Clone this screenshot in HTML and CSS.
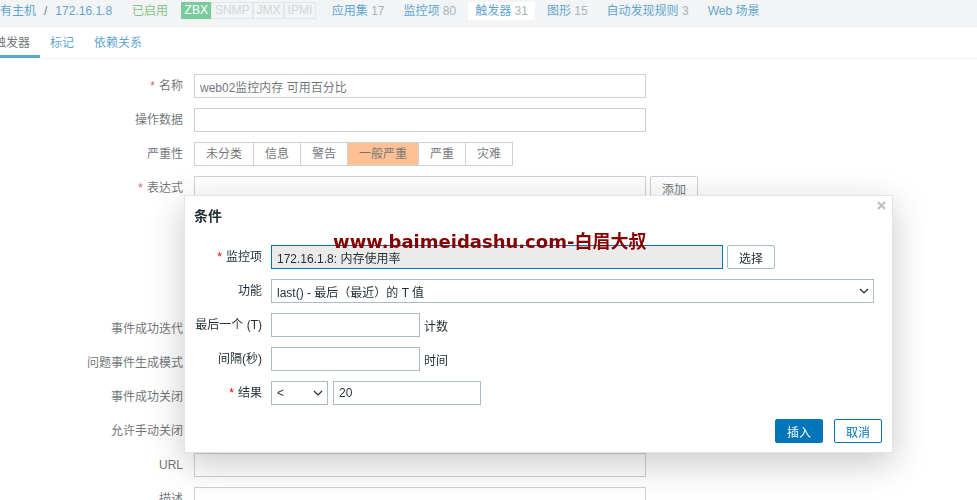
FILE: index.html
```html
<!DOCTYPE html>
<html>
<head>
    <meta charset="utf-8">
    <meta name="viewport" content="width=device-width, initial-scale=1.0">
    <title>触发器</title>
    <link rel="stylesheet" href="styles.css">
</head>
<body>
    <header class="host-nav">
        <div class="breadcrumbs">
            <a href="#">所有主机</a><span class="sep">/</span><a href="#">172.16.1.8</a>
        </div>
        <span class="status-on">已启用</span>
        <div class="avail">
            <span class="badge on">ZBX</span><span class="badge">SNMP</span><span class="badge">JMX</span><span class="badge">IPMI</span>
        </div>
        <nav class="host-links">
            <a href="#">应用集 <span class="count">17</span></a>
            <a href="#">监控项 <span class="count">80</span></a>
            <a href="#" class="selected">触发器 <span class="count">31</span></a>
            <a href="#">图形 <span class="count">15</span></a>
            <a href="#">自动发现规则 <span class="count">3</span></a>
            <a href="#">Web 场景</a>
        </nav>
    </header>

    <nav class="tabs">
        <a href="#" class="active">触发器</a>
        <a href="#">标记</a>
        <a href="#">依赖关系</a>
    </nav>

    <form class="trigger-form">
        <label class="required">名称</label>
        <div class="field"><input type="text" class="text wide" value="web02监控内存 可用百分比"></div>

        <label>操作数据</label>
        <div class="field"><input type="text" class="text wide"></div>

        <label>严重性</label>
        <div class="field">
            <div class="radio-group">
                <span>未分类</span><span>信息</span><span>警告</span><span class="checked">一般严重</span><span>严重</span><span>灾难</span>
            </div>
        </div>

        <label class="required">表达式</label>
        <div class="field top">
            <textarea class="text wide expr"></textarea>
            <button type="button" class="btn-grey">添加</button>
        </div>

        <label></label>
        <div class="field"><a href="#">表达式构造器</a></div>

        <label>事件成功迭代</label>
        <div class="field">
            <div class="radio-group">
                <span class="checked-blue">表达式</span><span>恢复表达式</span><span>无</span>
            </div>
        </div>

        <label>问题事件生成模式</label>
        <div class="field">
            <div class="radio-group">
                <span class="checked-blue">单个</span><span>多重</span>
            </div>
        </div>

        <label>事件成功关闭</label>
        <div class="field">
            <div class="radio-group">
                <span class="checked-blue">所有问题</span><span>所有问题如果标签值匹配</span>
            </div>
        </div>

        <label>允许手动关闭</label>
        <div class="field"><span class="checkbox"></span></div>

        <label>URL</label>
        <div class="field"><input type="text" class="text wide"></div>

        <label>描述</label>
        <div class="field top"><textarea class="text wide desc"></textarea></div>
    </form>

    <div class="overlay-bg"></div>

    <div class="dialogue">
        <div class="dialogue-head">
            <h4>条件</h4>
            <button type="button" class="close" title="关闭">
                <svg width="9" height="9" viewBox="0 0 9 9"><path d="M1 1 L8 8 M8 1 L1 8" stroke="#b7bec2" stroke-width="2" fill="none"/></svg>
            </button>
        </div>
        <div class="dialogue-body">
            <label class="required">监控项</label>
            <div class="field">
                <input type="text" class="text item" value="172.16.1.8: 内存使用率" readonly>
                <button type="button" class="btn-grey">选择</button>
            </div>

            <label>功能</label>
            <div class="field">
                <div class="select func">
                    <span>last() - 最后（最近）的 T 值</span>
                    <svg width="10" height="6" viewBox="0 0 10 6"><polyline points="1,1 5,5 9,1" stroke="#1f2c33" stroke-width="1.2" fill="none"/></svg>
                </div>
            </div>

            <label>最后一个 (T)</label>
            <div class="field"><input type="text" class="text short"><span>计数</span></div>

            <label>间隔(秒)</label>
            <div class="field"><input type="text" class="text short"><span>时间</span></div>

            <label class="required">结果</label>
            <div class="field gap5">
                <div class="select op">
                    <span>&lt;</span>
                    <svg width="10" height="6" viewBox="0 0 10 6"><polyline points="1,1 5,5 9,1" stroke="#1f2c33" stroke-width="1.2" fill="none"/></svg>
                </div>
                <input type="text" class="text short value" value="20">
            </div>
        </div>
        <div class="dialogue-foot">
            <button type="button" class="btn-main">插入</button>
            <button type="button" class="btn-alt">取消</button>
        </div>
    </div>

    <div class="watermark">www.baimeidashu.com-白眉大叔</div>
</body>
</html>
```

FILE: styles.css
```css
html, body {
    overflow: hidden;
}
body {
    margin: 0;
    font-family: "Liberation Sans", Arial, "Noto Sans CJK SC", sans-serif;
    font-size: 12px;
    color: #1f2c33;
    background: #fff;
    height: 500px;
    position: relative;
}
a {
    color: #0275b8;
    text-decoration: none;
}

/* host navigation bar */
.host-nav {
    display: flex;
    align-items: flex-start;
    height: 26px;
    margin-left: -19px;
    background: #ebeef0;
    border-bottom: 1px solid #dfe4e7;
}
.host-nav > * {
    margin-top: 2px;
}
.breadcrumbs {
    padding: 0 7px;
    line-height: 18px;
}
.breadcrumbs .sep {
    margin: 0 8px;
    color: #1f2c33;
}
.status-on {
    padding: 0 7px;
    margin-left: 6px;
    line-height: 18px;
    color: #429e47;
}
.avail {
    display: flex;
    margin-left: 6px;
}
.badge {
    padding: 0 2.5px;
    line-height: 15px;
    border: 1px solid #d5dadd;
    color: #b7c1c6;
}
.badge.on {
    background: #34af67;
    border-color: #34af67;
    color: #fff;
}
.host-links {
    display: flex;
    gap: 5px;
    margin-left: 9px;
}
.host-links a {
    padding: 0 7px;
    height: 18px;
    line-height: 18px;
}
.host-links a.selected {
    background: #fff;
}
.count {
    color: #768d99;
}

/* tabs */
.tabs {
    display: flex;
    margin-left: -16px;
    border-bottom: 1px solid #ebeef0;
}
.tabs a {
    padding: 6px 10px 2px;
    line-height: 20px;
    border-bottom: 3px solid transparent;
}
.tabs a.active {
    color: #1f2c33;
    border-bottom-color: #0275b8;
}

/* trigger form */
.trigger-form {
    display: grid;
    grid-template-columns: 183px 1fr;
    column-gap: 11px;
    row-gap: 10px;
    padding-top: 15px;
}
.trigger-form > label,
.dialogue-body > label {
    text-align: right;
    line-height: 24px;
    white-space: nowrap;
}
.required::before {
    content: "*";
    color: #dc0000;
    margin-right: 4px;
}
.field {
    display: flex;
    align-items: center;
    gap: 4px;
    min-height: 24px;
}
.field.top {
    align-items: flex-start;
}
.field.gap5 {
    gap: 5px;
}
.text {
    box-sizing: border-box;
    height: 24px;
    padding: 0 5px;
    border: 1px solid #acbbc2;
    background: #fff;
    font: inherit;
    color: #1f2c33;
    outline: none;
}
.wide {
    width: 452px;
}
textarea.text {
    resize: none;
    padding: 4px 5px;
}
.expr {
    height: 97px;
}
.desc {
    height: 70px;
}
.radio-group {
    display: flex;
}
.radio-group span {
    padding: 0 11px;
    line-height: 22px;
    border: 1px solid #acbbc2;
    margin-left: -1px;
    background: #fff;
}
.radio-group span:first-child {
    margin-left: 0;
}
.radio-group .checked {
    background: #ffa059;
}
.radio-group .checked-blue {
    background: #0275b8;
    border-color: #0275b8;
    color: #fff;
}
.checkbox {
    width: 12px;
    height: 12px;
    border: 1px solid #acbbc2;
    background: #fff;
}
.btn-grey {
    box-sizing: border-box;
    height: 24px;
    padding: 0 11px;
    border: 1px solid #acbbc2;
    background: #fff;
    font: inherit;
    color: #1f2c33;
    border-radius: 2px;
}

.overlay-bg {
    position: fixed;
    top: 0;
    left: 0;
    right: 0;
    bottom: 0;
    background: rgba(255, 255, 255, 0.35);
}

/* condition dialogue */
.dialogue {
    position: absolute;
    left: 184px;
    top: 195px;
    width: 709px;
    box-sizing: border-box;
    background: #fff;
    border: 1px solid #dfe4e7;
    box-shadow: 0 10px 34px rgba(0, 0, 0, 0.22);
}
.dialogue-head {
    padding: 11px 9px;
}
.dialogue-head h4 {
    margin: 0;
    font-size: 14px;
    line-height: 18px;
    font-weight: bold;
}
.close {
    position: absolute;
    top: 5px;
    right: 6px;
    padding: 0;
    border: none;
    background: none;
    width: 9px;
    height: 9px;
}
.close svg {
    display: block;
}
.dialogue-body {
    display: grid;
    grid-template-columns: 67px 1fr;
    column-gap: 9px;
    row-gap: 10px;
    padding: 9px 10px 0;
}
.item {
    width: 452px;
    background: #ebebeb;
    border-color: #0275b8;
}
.short {
    width: 149px;
}
.value {
    width: 148px;
}
.select {
    box-sizing: border-box;
    display: flex;
    align-items: center;
    justify-content: space-between;
    height: 24px;
    padding: 0 4px 0 5px;
    border: 1px solid #acbbc2;
    background: #fff;
}
.select.func {
    width: 603px;
}
.select.op {
    width: 57px;
}
.dialogue-foot {
    display: flex;
    justify-content: flex-end;
    gap: 11px;
    padding: 14px 10px 9px;
}
.btn-main,
.btn-alt {
    box-sizing: border-box;
    height: 24px;
    padding: 0 11px;
    font: inherit;
    border: 1px solid #0275b8;
    border-radius: 2px;
}
.btn-main {
    background: #0275b8;
    color: #fff;
}
.btn-alt {
    background: #fff;
    color: #0275b8;
}

.watermark {
    position: absolute;
    left: 333px;
    top: 233px;
    font-family: "DejaVu Sans", "Noto Sans CJK SC", sans-serif;
    font-weight: bold;
    font-size: 18px;
    line-height: 18px;
    color: #860000;
    white-space: nowrap;
}
```
